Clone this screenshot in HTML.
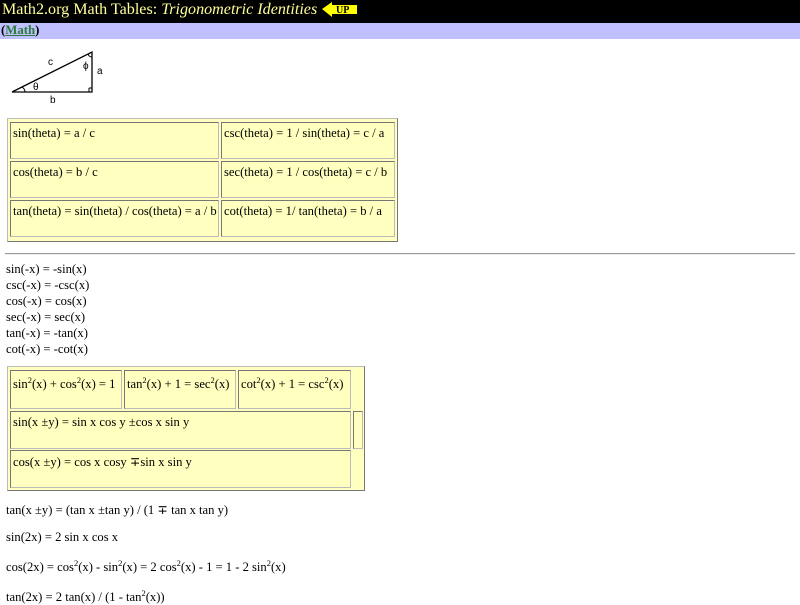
<!DOCTYPE html>
<html><head><meta charset="utf-8"><style>
*{margin:0;padding:0;box-sizing:border-box}
body{width:800px;height:600px;overflow:hidden;background:#fff;font-family:"Liberation Serif",serif;font-size:12.6px;color:#000;position:relative}
.a{position:absolute;white-space:nowrap}
.hdr{position:absolute;left:0;top:0;width:800px;height:23px;background:#000}
.nav{position:absolute;left:0;top:23px;width:800px;height:16px;background:#c0c0ff}
.tb{position:absolute;background:#ffffc0;border:1px solid;border-color:#bbb #777 #777 #bbb}
.c{position:absolute;background:#ffffc0;border:1px solid;border-color:#777 #bbb #bbb #777;padding:3px 2px;white-space:nowrap}
sup{font-size:8.5px;vertical-align:5px;line-height:0}
</style></head><body>
<div class="hdr"></div>
<div class="a" style="left:2px;top:1px;font-size:16.1px;color:#ffff99">Math2.org Math Tables: <i>Trigonometric Identities</i></div>
<svg class="a" style="left:322px;top:2px" width="36" height="16"><polygon points="0,7 10,0 10,3 35,3 35,12 10,12 10,15" fill="#ffff00"/><text x="14" y="11" font-family="Liberation Serif" font-weight="bold" font-size="10" fill="#000">UP</text></svg>
<div class="nav"></div>
<div class="a" style="left:1px;top:23px;font-weight:bold;font-size:12.8px">(<span style="color:#2a7a3a;text-decoration:underline">Math</span>)</div>
<svg class="a" style="left:0;top:45px" width="120" height="65" font-family="Liberation Sans" font-size="10">
<polyline points="12,47 92,7 92,47 12,47" fill="none" stroke="#000" stroke-width="1.3"/>
<path d="M89,43 h3 M89,43 v4" stroke="#000" fill="none"/>
<path d="M22,42 q3,2 3,5" stroke="#000" fill="none"/>
<path d="M88,9 q1,3 4,3" stroke="#000" fill="none"/>
<text x="48" y="20">c</text><text x="83" y="24">ϕ</text><text x="97" y="29">a</text><text x="33" y="45">θ</text><text x="50" y="58">b</text>
</svg>
<div class="tb" style="left:7px;top:118px;width:391px;height:124px"></div>
<div class="c" style="left:10px;top:122px;width:209px;height:37px">sin(theta) = a / c</div>
<div class="c" style="left:221px;top:122px;width:174px;height:37px">csc(theta) = 1 / sin(theta) = c / a</div>
<div class="c" style="left:10px;top:161px;width:209px;height:37px">cos(theta) = b / c</div>
<div class="c" style="left:221px;top:161px;width:174px;height:37px">sec(theta) = 1 / cos(theta) = c / b</div>
<div class="c" style="left:10px;top:200px;width:209px;height:37px">tan(theta) = sin(theta) / cos(theta) = a / b</div>
<div class="c" style="left:221px;top:200px;width:174px;height:37px">cot(theta) = 1/ tan(theta) = b / a</div>
<div class="a" style="left:5px;top:253px;width:790px;height:2px;border-top:1px solid #999;border-bottom:1px solid #eee"></div>
<div class="a" style="left:6px;top:261px;line-height:16px">sin(-x) = -sin(x)<br>csc(-x) = -csc(x)<br>cos(-x) = cos(x)<br>sec(-x) = sec(x)<br>tan(-x) = -tan(x)<br>cot(-x) = -cot(x)</div>
<div class="tb" style="left:7px;top:366px;width:358px;height:125px"></div>
<div class="c" style="left:10px;top:370px;width:112px;height:39px;padding-top:6px">sin<sup>2</sup>(x) + cos<sup>2</sup>(x) = 1</div>
<div class="c" style="left:124px;top:370px;width:112px;height:39px;padding-top:6px">tan<sup>2</sup>(x) + 1 = sec<sup>2</sup>(x)</div>
<div class="c" style="left:238px;top:370px;width:113px;height:39px;padding-top:6px">cot<sup>2</sup>(x) + 1 = csc<sup>2</sup>(x)</div>
<div class="c" style="left:10px;top:411px;width:341px;height:38px">sin(x ±y) = sin x cos y ±cos x sin y</div>
<div class="c" style="left:353px;top:411px;width:10px;height:38px"></div>
<div class="c" style="left:10px;top:450px;width:341px;height:38px">cos(x ±y) = cos x cosy ∓sin x sin y</div>
<div class="a" style="left:6px;top:502px">tan(x ±y) = (tan x ±tan y) / (1 ∓ tan x tan y)</div>
<div class="a" style="left:6px;top:530px">sin(2x) = 2 sin x cos x</div>
<div class="a" style="left:6px;top:560px">cos(2x) = cos<sup>2</sup>(x) - sin<sup>2</sup>(x) = 2 cos<sup>2</sup>(x) - 1 = 1 - 2 sin<sup>2</sup>(x)</div>
<div class="a" style="left:6px;top:590px">tan(2x) = 2 tan(x) / (1 - tan<sup>2</sup>(x))</div>
</body></html>
